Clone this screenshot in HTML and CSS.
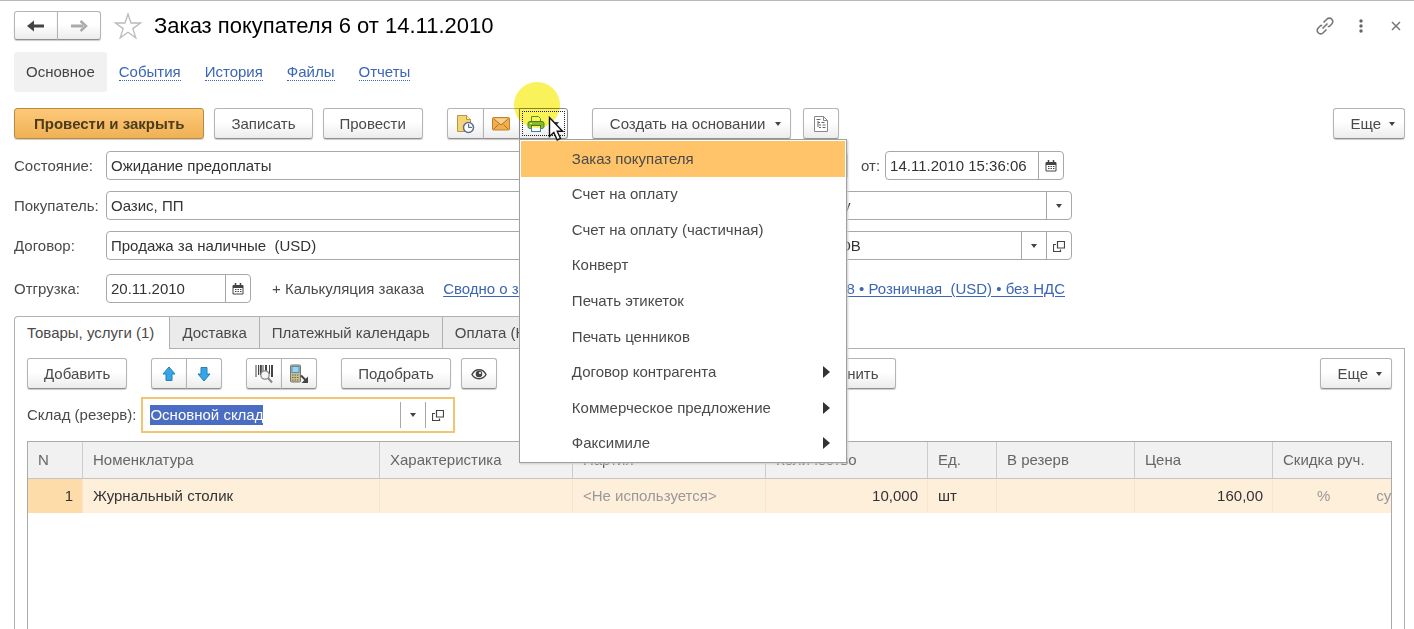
FILE: index.html
```html
<!DOCTYPE html>
<html lang="ru">
<head>
<meta charset="utf-8">
<title>Заказ покупателя 6 от 14.11.2010</title>
<link rel="stylesheet" href="styles.css">
</head>
<body>
<svg class="sprite" aria-hidden="true">
  <symbol id="i-cal" viewBox="0 0 12 12"><path d="M1 2.500h10v8.500H1z" fill="#fff" stroke="#444"/><path d="M1 2h10v3H1z" fill="#444"/><path d="M3.500 0v3M8.500 0v3" stroke="#444" stroke-width="1.500"/><path d="M3 6.500h6.500M3 8.500h6.500" stroke="#444" stroke-dasharray="1.500 1"/></symbol>
  <symbol id="i-open" viewBox="0 0 12 12"><path d="M4.500 1.500h7v6.500h-7z M3 4.500H.5v7h7V9.500" fill="none" stroke="#444" stroke-width="1.200"/></symbol>
</svg>
<main class="page">
  <header class="head">
    <div class="group nav-group">
      <button class="btn" aria-label="Назад"><svg width="18" height="12" viewBox="0 0 18 12"><path d="M17 6H5" stroke="#444" stroke-width="3"/><path d="M0 6l7-5.500v11z" fill="#444"/></svg></button>
      <button class="btn" aria-label="Вперед"><svg width="18" height="12" viewBox="0 0 18 12"><path d="M1 6h12" stroke="#aaa" stroke-width="3"/><path d="M10.500 1l5.500 5-5.500 5" fill="none" stroke="#aaa" stroke-width="2.500"/></svg></button>
    </div>
    <button class="plain" aria-label="В избранное"><svg width="28" height="28" viewBox="0 0 28 28"><path d="M14 2l3 9h9.500l-7.700 5.600 3 9.200L14 20.200l-7.800 5.600 3-9.200L1.500 11H11z" fill="#fff" stroke="#bbb" stroke-width="1.300"/></svg></button>
    <h1 class="title">Заказ покупателя 6 от 14.11.2010</h1>
    <div class="win">
      <button class="plain" aria-label="Ссылка"><svg width="20" height="20" viewBox="0 0 20 20" fill="none" stroke="#777" stroke-width="1.600"><path d="M8.500 6.500l3.300-3.300a3.400 3.400 0 0 1 5 0 3.400 3.400 0 0 1 0 4.800l-2.500 2.500-1.600 0M11.500 13.500l-3.300 3.300a3.400 3.400 0 0 1-5 0 3.400 3.400 0 0 1 0-4.800l2.500-2.500 1.600 0M7.500 12.500l5-5"/></svg></button>
      <button class="plain" aria-label="Меню"><svg width="6" height="16" viewBox="0 0 6 16" fill="#666"><circle cx="3" cy="3" r="1.700"/><circle cx="3" cy="8" r="1.700"/><circle cx="3" cy="13" r="1.700"/></svg></button>
      <button class="plain" aria-label="Закрыть"><svg width="10" height="10" viewBox="0 0 10 10"><path d="M1 1l8 8M9 1L1 9" stroke="#777" stroke-width="1.500"/></svg></button>
    </div>
  </header>

  <nav class="sections">
    <a class="section current" href="#main">Основное</a>
    <a class="section" href="#events"><span>События</span></a>
    <a class="section" href="#history"><span>История</span></a>
    <a class="section" href="#files"><span>Файлы</span></a>
    <a class="section" href="#reports"><span>Отчеты</span></a>
  </nav>

  <div class="bar">
    <button class="btn primary">Провести и закрыть</button>
    <button class="btn">Записать</button>
    <button class="btn">Провести</button>
    <div class="group spaced">
      <button class="btn icon" aria-label="Напоминание"><svg width="20" height="20" viewBox="0 0 20 20"><path d="M2.500 1.500h9l4 4v12h-13z" fill="#f4d678" stroke="#b9963c"/><path d="M11.500 1.500v4h4" fill="#fff3c4" stroke="#b9963c"/><circle cx="13.500" cy="13.500" r="5" fill="#fff" stroke="#5d6f91" stroke-width="1.500"/><path d="M13.500 10v3.500H17" fill="#ccd6ea" stroke="#5d6f91"/></svg></button>
      <button class="btn icon" aria-label="Письмо"><svg width="18" height="14" viewBox="0 0 18 14"><rect x=".5" y=".5" width="17" height="12.500" rx="1" fill="#f1ae4e" stroke="#c4812d"/><path d="M1.500 1.500L9 8l7.500-6.500" fill="#f9d08f" stroke="#b8721f"/><path d="M1.500 12.500l5-5M16.500 12.500l-5-5" stroke="#b8721f"/></svg></button>
      <div class="print">
        <button class="btn print-btn" aria-label="Печать" aria-expanded="true"><svg width="18" height="18" viewBox="0 0 18 18"><path d="M4.500 7V1.500h7l2 2V7" fill="#fff" stroke="#5f9a45"/><rect x="1" y="6.500" width="16" height="7" rx="2" fill="#8cc45f" stroke="#4c8a36"/><rect x="4.500" y="10.500" width="9" height="6" fill="#fff" stroke="#4a7ba8"/><path d="M3 8.500h2" stroke="#fff"/></svg><i class="caret"></i></button>
        <div class="spot"></div>
        <div class="menu" role="menu">
          <button role="menuitem" class="item active">Заказ покупателя</button>
          <button role="menuitem" class="item">Счет на оплату</button>
          <button role="menuitem" class="item">Счет на оплату (частичная)</button>
          <button role="menuitem" class="item">Конверт</button>
          <button role="menuitem" class="item">Печать этикеток</button>
          <button role="menuitem" class="item">Печать ценников</button>
          <button role="menuitem" class="item more">Договор контрагента</button>
          <button role="menuitem" class="item more">Коммерческое предложение</button>
          <button role="menuitem" class="item more">Факсимиле</button>
        </div>
        <svg class="pointer" width="16" height="26" viewBox="0 0 16 26"><path d="M1.500 1.500v19l4.300-4 3.400 7.500 3.300-1.500-3.300-7.300h5.300z" fill="#fff" stroke="#111" stroke-width="1.400"/></svg>
      </div>
    </div>
    <button class="btn spaced drop">Создать на основании<i class="caret"></i></button>
    <button class="btn icon" aria-label="Структура"><svg width="16" height="18" viewBox="0 0 16 18"><path d="M1.500 1.500h9l4 4v11h-13z" fill="#fff" stroke="#888"/><path d="M10.500 1.500v4h4" fill="none" stroke="#888"/><path d="M3.500 4.500h4M5 7.500h2M8.500 7.500h3M6 10h2M9.500 10h3M6 12.500h2M9.500 12.500h3M5 6v6" stroke="#666"/></svg></button>
    <button class="btn drop more-btn">Еще<i class="caret"></i></button>
  </div>

  <form class="form">
    <div class="row">
      <label class="lbl" for="state">Состояние:</label>
      <div class="field left"><input id="state" value="Ожидание предоплаты"></div>
      <div class="field right number"><input aria-label="Номер" value="6"></div>
      <label class="from" for="date">от:</label>
      <div class="field date"><input id="date" value="14.11.2010 15:36:06"><button type="button" aria-label="Выбрать дату"><svg width="12" height="12"><use href="#i-cal"/></svg></button></div>
    </div>
    <div class="row">
      <label class="lbl" for="buyer">Покупатель:</label>
      <div class="field left"><input id="buyer" value="Оазис, ПП"></div>
      <div class="field right"><input class="org" aria-label="Организация" value="Фирма у"><button type="button" aria-label="Список"><i class="caret"></i></button></div>
    </div>
    <div class="row">
      <label class="lbl" for="contract">Договор:</label>
      <div class="field left"><input id="contract" value="Продажа за наличные  (USD)"></div>
      <div class="field right"><input class="resp" aria-label="Ответственный" value="ИВАНОВ"><button type="button" aria-label="Список"><i class="caret"></i></button><button type="button" aria-label="Открыть"><svg width="12" height="12"><use href="#i-open"/></svg></button></div>
    </div>
    <div class="row ship">
      <label class="lbl" for="ship">Отгрузка:</label>
      <div class="field shipdate"><input id="ship" value="20.11.2010"><button type="button" aria-label="Выбрать дату"><svg width="12" height="12"><use href="#i-cal"/></svg></button></div>
      <span class="calc">+ Калькуляция заказа</span>
      <a class="link" href="#summary">Сводно о заказе</a>
      <a class="link prices" href="#prices">Курс 8 • Розничная&nbsp; (USD) • без НДС</a>
    </div>
  </form>

  <div class="tabs" role="tablist">
    <button class="tab on" role="tab" aria-selected="true">Товары, услуги (1)</button>
    <button class="tab" role="tab">Доставка</button>
    <button class="tab" role="tab">Платежный календарь</button>
    <button class="tab" role="tab">Оплата (Нет)</button>
  </div>
  <section class="panel">
    <div class="bar inner">
      <button class="btn">Добавить</button>
      <div class="group spaced">
        <button class="btn icon" aria-label="Вверх"><svg width="14" height="16" viewBox="0 0 14 16"><path d="M7 1l6 7H10v6.500H4V8H1z" fill="#35a5e5" stroke="#2580b8"/></svg></button>
        <button class="btn icon" aria-label="Вниз"><svg width="14" height="16" viewBox="0 0 14 16"><path d="M7 15L1 8h3V1.500h6V8h3z" fill="#35a5e5" stroke="#2580b8"/></svg></button>
      </div>
      <div class="group spaced">
        <button class="btn icon" aria-label="Штрихкод"><svg width="20" height="20" viewBox="0 0 20 20"><path d="M2 1v12M4.500 1v10M9 1v8M15.500 1v9" stroke="#444"/><path d="M6.800 1v10M12 1v8M18 1v12" stroke="#444" stroke-width="2"/><circle cx="11" cy="11" r="4.200" fill="#f3f5f8" stroke="#888" stroke-width="1.300"/><path d="M14 14l4 4.500" stroke="#888" stroke-width="2"/></svg></button>
        <button class="btn icon" aria-label="Терминал"><svg width="20" height="20" viewBox="0 0 20 20"><rect x="1.500" y="1" width="10" height="17" rx="1" fill="#c9c08a" stroke="#777"/><rect x="3" y="2.500" width="7" height="6" fill="#9ad4f5" stroke="#4c8fb8"/><path d="M3 11h7M3 13.500h7M3 16h7" stroke="#666" stroke-dasharray="1.500 1"/><path d="M12 11.500l5 5" stroke="#444" stroke-width="2"/><path d="M19 12.500V19h-6.500z" fill="#444"/></svg></button>
      </div>
      <button class="btn spaced">Подобрать</button>
      <button class="btn icon" aria-label="Просмотр"><svg width="16" height="12" viewBox="0 0 16 12"><path d="M1 6.500C4 0 12 0 15 6.500 12 12 4 12 1 6.500z" fill="#fff" stroke="#444" stroke-width="1.500"/><circle cx="8" cy="6" r="3.300" fill="#444"/><circle cx="9" cy="5" r="1.100" fill="#fff"/></svg></button>
      <button class="btn change">Изменить</button>
      <button class="btn drop more-btn">Еще<i class="caret"></i></button>
    </div>
    <div class="store">
      <label for="store">Склад (резерв):</label>
      <div class="field focus"><input id="store" value="Основной склад"><button type="button" aria-label="Список"><i class="caret"></i></button><button type="button" aria-label="Открыть"><svg width="12" height="12"><use href="#i-open"/></svg></button></div>
    </div>
    <div class="grid">
      <table>
        <colgroup><col class="c-n"><col class="c-name"><col class="c-mid"><col class="c-mid"><col class="c-qty"><col class="c-unit"><col class="c-num"><col class="c-num"><col></colgroup>
        <thead><tr><th>N</th><th>Номенклатура</th><th>Характеристика</th><th>Партия</th><th>Количество</th><th>Ед.</th><th>В резерв</th><th>Цена</th><th>Скидка руч.</th></tr></thead>
        <tbody><tr><td class="num sel">1</td><td>Журнальный столик</td><td></td><td class="muted">&lt;Не используется&gt;</td><td class="num">10,000</td><td>шт</td><td></td><td class="num">160,00</td><td class="muted disc"><span>%</span><span>сумма</span></td></tr></tbody>
      </table>
    </div>
  </section>
</main>
<script src="main.js"></script>
</body>
</html>
```
FILE: styles.css
```css
* { box-sizing: border-box; }

body {
  margin: 0;
  background: #fff;
  color: #4a4a4a;
  font: 15px/20px "Liberation Sans", Arial, sans-serif;
}

button, input {
  font: inherit;
  color: inherit;
}

svg { display: block; flex: none; }

.sprite {
  position: absolute;
  width: 0;
  height: 0;
}

.page {
  display: flex;
  flex-direction: column;
  height: 100vh;
  overflow: hidden;
  padding: 10px 9px 0 14px;
  border-top: 1px solid #b8b8b8;
}

.btn {
  display: flex;
  align-items: center;
  justify-content: center;
  gap: 8px;
  height: 31px;
  padding: 0 16px;
  border: 1px solid #b4b4b4;
  border-bottom-color: #8e8e8e;
  border-radius: 3px;
  background: linear-gradient(#fff 45%, #ececec);
  box-shadow: 0 1px 1px #ccc;
  white-space: nowrap;
}

.icon { width: 36px; padding: 0; }

.primary {
  padding: 0 19px;
  border-color: #b98a42;
  background: linear-gradient(#fdc978, #f0b155);
  font-weight: bold;
  color: #4d3b1c;
}

.caret {
  border: 3px solid transparent;
  border-top: 4px solid #444;
  border-bottom: 0;
}

.plain {
  padding: 0;
  border: 0;
  background: none;
}

.group { display: flex; }
.group > .icon { width: 37px; }
.inner .group > .icon { width: 36px; }
.group > .btn:not(:last-child) { border-radius: 3px 0 0 3px; }
.group > .btn + .btn { margin-left: -1px; border-radius: 0 3px 3px 0; }
.group > .btn + .btn:not(:last-child) { border-radius: 0; }

.head {
  display: flex;
  align-items: center;
  height: 29px;
  gap: 12px;
}

.nav-group .btn { width: 44px; height: 29px; padding: 0; }
.nav-group { margin-right: 1px; }

.title {
  margin: 0;
  color: #000;
  font-size: 22px;
  font-weight: normal;
}

.win {
  display: flex;
  align-items: center;
  gap: 27px;
  margin-left: auto;
  padding-right: 4px;
}
.win .plain:first-child { margin-right: -4px; }

.sections {
  display: flex;
  align-items: center;
  height: 40px;
  margin-top: 12px;
}
.section {
  padding: 10px 12px;
  color: #3b66b5;
  text-decoration: none;
}
.section span { border-bottom: 1px dotted #3b66b5; }
.section.current {
  border-radius: 3px;
  background: #f1f1f1;
  color: #444;
}

.bar {
  display: flex;
  gap: 10px;
  margin-top: 16px;
}
.spaced { margin-left: 14px; }
.drop { padding-right: 9px; }
.drop.spaced { padding: 0 9px 0 17px; gap: 10px; }
.drop + .icon { margin-left: 2px; }
.more-btn { margin-left: auto; }

.print { position: relative; margin-left: -1px; }
.print-btn {
  width: 49px;
  padding: 0;
  border-color: #888;
  border-radius: 0 3px 3px 0;
  outline: 1px dotted #222;
  outline-offset: -4px;
}

.spot {
  position: absolute;
  top: -26px;
  left: -5px;
  width: 46px;
  height: 46px;
  border-radius: 50%;
  background: #faf25a;
  mix-blend-mode: multiply;
}

.pointer {
  position: absolute;
  z-index: 3;
  top: 8px;
  left: 29px;
}

.menu {
  position: absolute;
  z-index: 2;
  top: 31px;
  left: 0;
  display: flex;
  flex-direction: column;
  width: 328px;
  height: 324px;
  padding: 1px;
  border: 1px solid #a0a0a0;
  background: #fff;
  box-shadow: 1px 1px 2px #ccc;
}
.item {
  display: flex;
  flex: 1;
  align-items: center;
  justify-content: space-between;
  padding: 0 15px 0 51px;
  border: 0;
  background: none;
  text-align: left;
}
.item.active { background: #ffc469; }
.more::after {
  content: "";
  border: 6px solid transparent;
  border-left: 7px solid #333;
  border-right: 0;
}

.form {
  display: flex;
  flex-direction: column;
  gap: 11px;
  max-width: 1058px;
  margin-top: 12px;
}
.row { display: flex; align-items: center; }
.lbl { width: 92px; }

.field {
  display: flex;
  height: 29px;
  border: 1px solid #a8a8a8;
  border-radius: 4px;
  background: #fff;
  color: #333;
}
.field input {
  flex: 1;
  min-width: 0;
  padding: 0 4px;
  border: 0;
  outline: 0;
  background: none;
}
.field button {
  display: flex;
  align-items: center;
  justify-content: center;
  width: 25px;
  padding: 0;
  border: 0;
  border-left: 1px solid #a8a8a8;
  background: none;
}
.left { width: 500px; }
.right { flex: 1; margin-left: 150px; }
.number { flex: none; width: 92px; }
.from { margin: 0 5px 0 13px; }
.date { width: 179px; }
.field .org { padding-left: 35px; }
.field .resp { padding-left: 41px; }
.ship { margin-top: 3px; }
.shipdate { width: 145px; }
.calc { margin: 0 19px 0 21px; }
.link { color: #3b66b5; text-underline-offset: 2px; }
.prices { margin: 0 7px 0 auto; }

.tabs { display: flex; margin-top: 13px; }
.tab {
  height: 32px;
  margin-right: -1px;
  padding: 0 12px;
  border: 1px solid #b0b0b0;
  border-bottom: 0;
  background: #ebebeb;
}
.tab.on {
  position: relative;
  height: 33px;
  margin-bottom: -1px;
  padding-right: 15px;
  border-radius: 4px 0 0 0;
  background: #fff;
}

.panel {
  display: flex;
  flex: 1;
  flex-direction: column;
  min-height: 0;
  padding: 0 12px;
  border: 1px solid #b0b0b0;
  border-bottom: 0;
}
.inner { margin-top: 9px; }
.change { margin-left: 287px; }

.store {
  display: flex;
  align-items: center;
  gap: 5px;
  margin-top: 8px;
}
.focus {
  width: 314px;
  height: 36px;
  padding: 3px;
  border: 2px solid #f3c571;
  border-radius: 0;
}
.focus input::selection { background: #4a6cc3; color: #fff; }

.grid {
  flex: 1;
  min-height: 0;
  margin-top: 8px;
  border: 1px solid #aaa;
  border-bottom: 0;
  overflow: hidden;
}
table {
  width: 100%;
  table-layout: fixed;
  border-collapse: separate;
  border-spacing: 0;
}
.c-n { width: 55px; }
.c-name { width: 297px; }
.c-mid { width: 193px; }
.c-qty { width: 162px; }
.c-unit { width: 69px; }
.c-num { width: 138px; }
th, td {
  padding: 0 9px 0 10px;
  text-align: left;
  white-space: nowrap;
  overflow: hidden;
}
th {
  height: 37px;
  border-right: 1px solid #ccc;
  border-bottom: 1px solid #c4c4c4;
  background: #f1f1f1;
  color: #666;
  font-weight: normal;
}
td {
  height: 34px;
  border-right: 1px solid #f7e6cc;
  background: #fdefd9;
  color: #333;
}
th:last-child, td:last-child { border-right: 0; }
.num { text-align: right; }
.sel { background: #fddcaa; }
td.muted { color: #999; }
.disc span:first-child { margin: 0 46px 0 34px; }
```
FILE: main.js
```js
const store = document.getElementById("store");
store.focus();
store.select();
```
